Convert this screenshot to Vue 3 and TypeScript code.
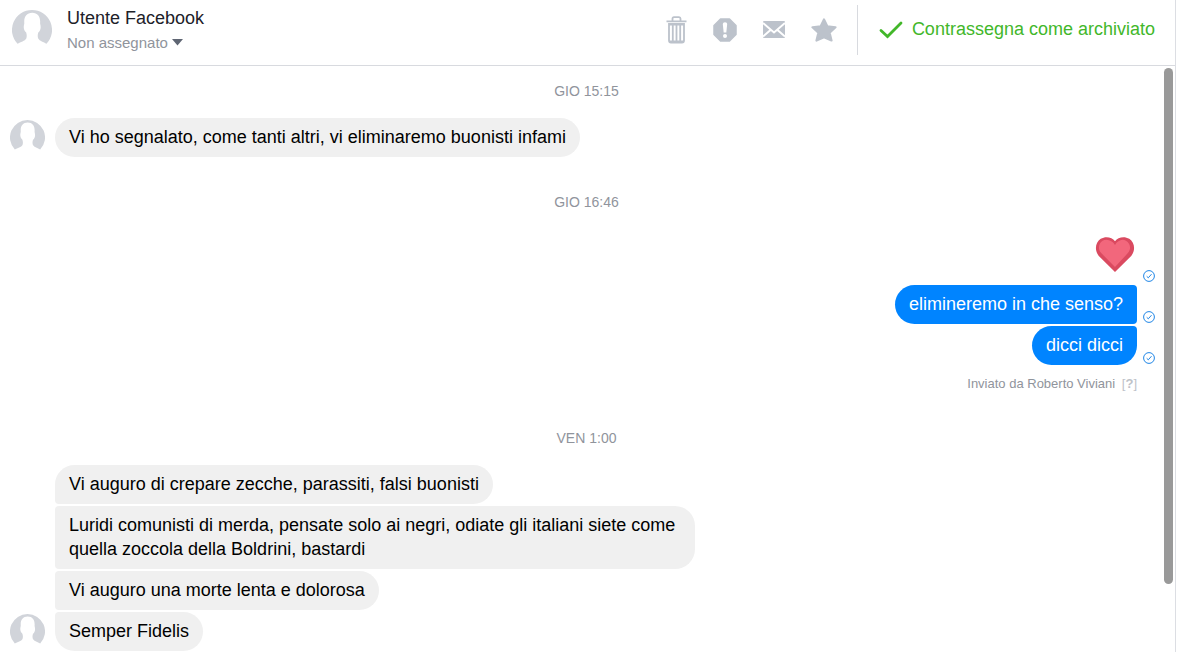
<script setup lang="ts">
interface Message {
  kind: 'text' | 'heart'
  text?: string
}
interface Group {
  time: string
  own: boolean
  messages: Message[]
  sender?: string
}

const groups: Group[] = [
  {
    time: 'GIO 15:15',
    own: false,
    messages: [{ kind: 'text', text: 'Vi ho segnalato, come tanti altri, vi eliminaremo buonisti infami' }],
  },
  {
    time: 'GIO 16:46',
    own: true,
    sender: 'Inviato da Roberto Viviani',
    messages: [
      { kind: 'heart' },
      { kind: 'text', text: 'elimineremo in che senso?' },
      { kind: 'text', text: 'dicci dicci' },
    ],
  },
  {
    time: 'VEN 1:00',
    own: false,
    messages: [
      { kind: 'text', text: 'Vi auguro di crepare zecche, parassiti, falsi buonisti' },
      {
        kind: 'text',
        text: 'Luridi comunisti di merda, pensate solo ai negri, odiate gli italiani siete come quella zoccola della Boldrini, bastardi',
      },
      { kind: 'text', text: 'Vi auguro una morte lenta e dolorosa' },
      { kind: 'text', text: 'Semper Fidelis' },
    ],
  },
]

const silhouette =
  'M20 0A20 20 0 0 0 5.500 33.800C8.500 32 13 31 14.300 28.500C15 26.500 14.800 24.500 14.200 22.500C12.500 21.500 11.500 18.500 11.800 16.500C11.800 15 12.300 14.500 12.300 13C11.800 7 14.500 2.800 20.200 2.800C26 2.800 28.600 7 28.100 13C28.100 14.500 28.600 15 28.600 16.500C28.900 18.500 28 21.500 26.300 22.500C25.600 24.500 25.500 26.500 26.200 28.500C27.500 31 31.800 32 34.500 33.800A20 20 0 0 0 20 0Z'
</script>

<template>
  <main class="panel">
    <header class="bar">
      <svg class="avatar large" viewBox="0 0 40 40" aria-hidden="true"><path :d="silhouette" /></svg>
      <div class="who">
        <h1>Utente Facebook</h1>
        <button type="button" class="assign">
          Non assegnato
          <svg width="11" height="7" viewBox="0 0 11 7" aria-hidden="true"><path d="M0 0H11L5.500 6.500Z" fill="#5f6673" /></svg>
        </button>
      </div>
      <div class="tools">
        <button type="button" aria-label="Elimina">
          <svg width="21" height="28" viewBox="0 0 21 28" aria-hidden="true">
            <path d="M.500 5.300H20.500M6.500 5V2.800Q6.500 1.200 8 1.200H13Q14.500 1.200 14.500 2.800V5" fill="none" stroke="#bcc2cb" stroke-width="1.800" />
            <path d="M3 8H18V24.500Q18 26.500 16 26.500H5Q3 26.500 3 24.500Z" fill="none" stroke="#bcc2cb" stroke-width="1.800" />
            <path d="M6.800 8V26M10.500 8V26M14.200 8V26" stroke="#bcc2cb" stroke-width="1.800" />
            <path d="M3 8.500H18M3 25.500H18" stroke="#bcc2cb" stroke-width="2" />
          </svg>
        </button>
        <button type="button" aria-label="Segnala come spam">
          <svg width="24" height="24" viewBox="0 0 24 24" aria-hidden="true">
            <path d="M7.500 1H16.500L23 7.500V16.500L16.500 23H7.500L1 16.500V7.500Z" fill="#bcc2cb" stroke="#bcc2cb" stroke-width="1.500" stroke-linejoin="round" />
            <path d="M9.800 6Q9.800 4.200 12 4.200Q14.200 4.200 14.200 6L13.300 14.500H10.700Z" fill="#fff" />
            <circle cx="12" cy="18" r="2" fill="#fff" />
          </svg>
        </button>
        <button type="button" aria-label="Segna come da leggere">
          <svg width="22" height="17" viewBox="0 0 22 17" aria-hidden="true">
            <rect width="22" height="17" rx="1" fill="#bcc2cb" />
            <path d="M0 2L11 11.500L22 2M0 15.500L7.500 9M22 15.500L14.500 9" fill="none" stroke="#fff" stroke-width="2" />
          </svg>
        </button>
        <button type="button" aria-label="Aggiungi a speciali">
          <svg width="26" height="24" viewBox="0 0 26 24" aria-hidden="true">
            <path d="M13 1.500L16.300 8.300L24.500 9.300L18.600 14.800L20.500 22.500L13 19.300L5.500 22.500L7.400 14.800L1.500 9.300L9.700 8.300Z" fill="#bcc2cb" stroke="#bcc2cb" stroke-width="2.200" stroke-linejoin="round" />
          </svg>
        </button>
      </div>
      <button type="button" class="archive">
        <svg width="24" height="18" viewBox="0 0 24 18" aria-hidden="true">
          <path d="M2 9.500L8.500 15.500L22 2" fill="none" stroke="#42b72a" stroke-width="2.800" stroke-linecap="round" />
        </svg>
        Contrassegna come archiviato
      </button>
    </header>

    <section class="thread" aria-label="Conversazione">
      <div v-for="group in groups" :key="group.time" class="group" :class="{ own: group.own }">
        <time>{{ group.time }}</time>
        <div class="cluster">
          <svg v-if="!group.own" class="avatar" viewBox="0 0 40 40" aria-hidden="true"><path :d="silhouette" /></svg>
          <div class="stack">
            <div v-for="(message, index) in group.messages" :key="index" class="row">
              <svg v-if="message.kind === 'heart'" class="heart" viewBox="0 0 42 38" role="img" aria-label="Cuore">
                <path d="M21 37.500L4 20.500C-1 14.500 .500 6 6 2.500C11.500-.800 18 1 21 5C24 1 30.500-.800 36 2.500C41.500 6 43 14.500 38 20.500Z" fill="#da4a60" />
                <path d="M21 32L6.500 17.500C2.500 13 4 7 8 4.500C12.500 2 18.500 4.500 21 9C23.500 4.500 28.500 2 32.500 4.500C37 7 38.500 13 34.500 17.500Z" fill="#f2677c" />
              </svg>
              <p v-else class="bubble" :class="{ first: index === 0, last: index === group.messages.length - 1 }">{{ message.text }}</p>
              <svg v-if="group.own" class="sent" viewBox="0 0 12 12" role="img" aria-label="Inviato">
                <circle cx="6" cy="6" r="5.400" />
                <path d="M3.700 6.300L5.300 7.800L8.500 4.200" />
              </svg>
            </div>
          </div>
        </div>
        <p v-if="group.sender" class="sender">{{ group.sender }} <a href="#">[<b>?</b>]</a></p>
      </div>
      <div class="thumb"></div>
    </section>
  </main>
</template>

<style>
body {
  margin: 0;
  background: #fff;
}
</style>

<style scoped>
.panel {
  display: flex;
  flex-direction: column;
  box-sizing: border-box;
  height: 100vh;
  margin-right: 1px;
  border-right: 1px solid #dcdee3;
  font-family: "Liberation Sans", Arial, sans-serif;
  color: #000;
}
button {
  display: flex;
  align-items: center;
  padding: 0;
  border: 0;
  background: none;
  font: inherit;
  cursor: pointer;
}
h1,
p {
  margin: 0;
}
.bar {
  display: flex;
  flex: none;
  align-items: center;
  box-sizing: border-box;
  height: 66px;
  padding: 0 20px 6px 12px;
  border-bottom: 1px solid #d8dadf;
}
.avatar {
  flex: none;
  width: 35px;
  height: 35px;
  margin-bottom: 2px;
  fill: #d1d4da;
}
.avatar.large {
  width: 40px;
  height: 40px;
  margin-bottom: 0;
}
.who {
  margin-left: 15px;
}
h1 {
  font-size: 18px;
  font-weight: 400;
  line-height: 26px;
  color: #1d2129;
}
.assign {
  gap: 4px;
  font-size: 15px;
  line-height: 24px;
  color: #90949c;
}
.tools {
  display: flex;
  align-items: center;
  gap: 26px;
  margin-left: auto;
  padding-right: 20px;
}
.archive {
  gap: 9px;
  height: 50px;
  padding-left: 21px;
  border-left: 1px solid #d8dadf;
  font-size: 18px;
  color: #42b72a;
}
.thread {
  position: relative;
  flex: 1;
  min-height: 0;
  padding: 15px 2px 0 0;
  overflow: hidden;
}
.group + .group {
  margin-top: 35px;
}
time {
  display: block;
  margin-bottom: 17px;
  font-size: 14px;
  line-height: 20px;
  text-align: center;
  color: #90949c;
}
.cluster {
  display: flex;
  align-items: flex-end;
  gap: 10px;
  padding: 0 18px 0 10px;
}
.own .cluster {
  justify-content: flex-end;
}
.stack {
  display: flex;
  flex-direction: column;
  align-items: flex-start;
  gap: 2px;
}
.own .stack {
  align-items: flex-end;
}
.row {
  display: flex;
  align-items: flex-end;
  gap: 6px;
}
.bubble {
  box-sizing: border-box;
  max-width: 640px;
  padding: 7px 14px 8px;
  border-radius: 4px 20px 20px 4px;
  background: #f0f0f0;
  font-size: 18px;
  line-height: 24px;
}
.bubble.first {
  border-top-left-radius: 20px;
}
.bubble.last {
  border-bottom-left-radius: 20px;
}
.own .bubble {
  border-radius: 20px 4px 4px 20px;
  background: #0084ff;
  color: #fff;
}
.own .bubble.last {
  border-bottom-right-radius: 20px;
}
.heart {
  width: 40px;
  height: 37px;
  margin: 7px 2px 10px 0;
}
.sent {
  width: 12px;
  height: 12px;
  margin-bottom: 1px;
  fill: none;
  stroke: #1f86e6;
}
.sender {
  margin-top: 10px;
  padding-right: 36px;
  font-size: 13px;
  line-height: 18px;
  text-align: right;
  color: #90949c;
}
.sender a {
  margin-left: 3px;
  color: #bec2c9;
  text-decoration: none;
}
.thumb {
  position: absolute;
  top: 2px;
  right: 2px;
  width: 9px;
  height: 88%;
  border-radius: 5px;
  background: #999;
}
</style>
